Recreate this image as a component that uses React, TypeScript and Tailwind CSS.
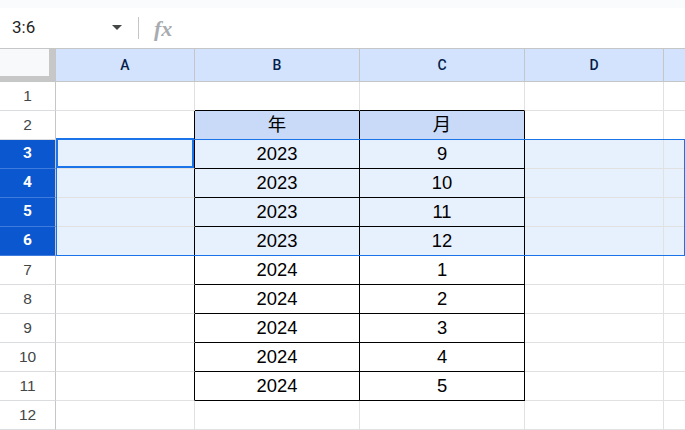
import React from "react";
import clsx from "clsx";

const data: Record<number, [string, string]> = {
  2: ["年", "月"],
  3: ["2023", "9"],
  4: ["2023", "10"],
  5: ["2023", "11"],
  6: ["2023", "12"],
  7: ["2024", "1"],
  8: ["2024", "2"],
  9: ["2024", "3"],
  10: ["2024", "4"],
  11: ["2024", "5"],
};

const rows = [1, 2, 3, 4, 5, 6, 7, 8, 9, 10, 11, 12];
const selected = (r: number) => r >= 3 && r <= 6;

function Cell({
  w,
  bg,
  right,
  bottom,
  children,
}: {
  w: string;
  bg: string;
  right: boolean;
  bottom: boolean;
  children?: React.ReactNode;
}) {
  return (
    <div
      className={clsx(
        "flex h-full shrink-0 items-center justify-center border-r border-b text-[18.4px] text-black",
        w,
        bg,
        right ? "border-r-black" : "border-r-[#e1e1e1]",
        bottom ? "border-b-black" : "border-b-[#e1e1e1]"
      )}
    >
      {children}
    </div>
  );
}

export default function App() {
  return (
    <div
      className="h-[430px] w-[685px] overflow-hidden bg-white"
      style={{ fontFamily: '"Liberation Sans", Arial, "Noto Sans CJK JP", sans-serif' }}
    >
      {/* formula bar */}
      <div className="bg-[#f9fbfd] pt-[8px]">
        <div className="flex h-[41px] items-center border-b border-[#c4c7c5] bg-white">
          <div className="flex w-[138px] items-center justify-between pl-[12px] pr-[16px]">
            <span className="font-['Roboto'] text-[17px] text-[#1f1f1f]">3:6</span>
            <svg width="10" height="6" viewBox="0 0 10 6">
              <path d="M0 0 L10 0 L5 5 Z" fill="#444746" />
            </svg>
          </div>
          <div className="h-[22px] w-px bg-[#c4c7c5]" />
          <span className="ml-[15px] font-['Liberation_Serif'] text-[22px] font-bold italic text-[#a8abb0]">
            fx
          </span>
        </div>
      </div>

      {/* grid */}
      <div className="relative">
        {/* column headers */}
        <div className="flex h-[33px] border-b border-[#c4c7c5]">
          <div className="w-[56px] shrink-0 border-r border-[#c4c7c5]">
            <div className="h-full w-[55px] border-r-[6px] border-b-[5px] border-[#c7c7c7] bg-[#f8f9fa]" />
          </div>
          {[
            ["A", "w-[139px]"],
            ["B", "w-[165px]"],
            ["C", "w-[165px]"],
            ["D", "w-[139px]"],
          ].map(([l, w]) => (
            <div
              key={l}
              className={clsx(
                "flex shrink-0 items-center justify-center border-r border-[#c4c7c5] bg-[#d3e3fd] font-['Roboto'] text-[14px] font-medium text-[#041e49]",
                w
              )}
            >
              {l}
            </div>
          ))}
          <div className="flex-1 bg-[#d3e3fd]" />
        </div>

        {rows.map((r) => {
          const sel = selected(r);
          const inTable = r >= 2 && r <= 11;
          const vals = data[r];
          const rowBg = sel ? "bg-[#e7f0fd]" : "bg-white";
          const tableBg = r === 2 ? "bg-[#c9daf8]" : rowBg;
          return (
            <div key={r} className="flex h-[29px]">
              <div
                className={clsx(
                  "flex w-[56px] shrink-0 items-center justify-center border-r border-b border-r-[#c4c7c5] text-[15.5px]",
                  sel
                    ? "border-b-[#3f7bdc] bg-[#0b57d0] font-['Roboto'] font-bold text-white"
                    : "border-b-[#dadce0] bg-white text-[#444746]"
                )}
              >
                {r}
              </div>
              <Cell w="w-[139px]" bg={rowBg} right={inTable} bottom={false} />
              <Cell w="w-[165px]" bg={inTable ? tableBg : rowBg} right={inTable} bottom={r <= 11}>
                {vals?.[0]}
              </Cell>
              <Cell w="w-[165px]" bg={inTable ? tableBg : rowBg} right={inTable} bottom={r <= 11}>
                {vals?.[1]}
              </Cell>
              <Cell w="w-[139px]" bg={rowBg} right={false} bottom={false} />
              <div className={clsx("h-full flex-1 border-b border-[#e1e1e1]", rowBg)} />
            </div>
          );
        })}

        {/* selected range outline, rows 3-6 */}
        <div className="pointer-events-none absolute top-[90px] left-[56px] right-0 h-[117px] border border-[#1a73e8]" />
        {/* active cell A3 */}
        <div className="pointer-events-none absolute top-[89px] left-[56px] h-[30px] w-[138px] border-2 border-[#1a73e8]" />
      </div>
    </div>
  );
}
